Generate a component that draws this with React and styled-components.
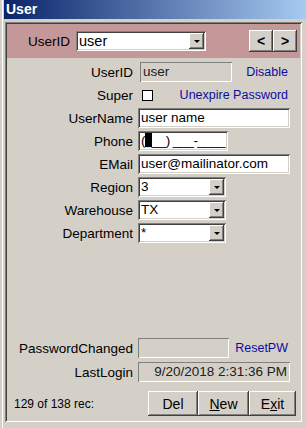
import React from "react";
import styled, { createGlobalStyle } from "styled-components";

const GlobalStyle = createGlobalStyle`
  html, body {
    margin: 0;
    padding: 0;
    background: #d4d0c8;
  }
  body {
    font-family: "Liberation Sans", Arial, sans-serif;
    color: #000;
  }
`;

const raised = `
  box-shadow: inset -1px -1px #404040, inset 1px 1px #fff,
    inset -2px -2px #808080, inset 2px 2px #d4d0c8;
`;
const sunken = `
  box-shadow: inset 1px 1px #808080, inset -1px -1px #fff,
    inset 2px 2px #404040, inset -2px -2px #d4d0c8;
`;

const Page = styled.div`
  width: 306px;
  height: 428px;
  box-sizing: border-box;
  padding-left: 2px;
  background: #d4d0c8;
  overflow: hidden;
`;
const Window = styled.div`
  height: 100%;
  box-sizing: border-box;
  border-left: 1px solid #fff;
  padding-left: 1px;
  display: flex;
  flex-direction: column;
`;
const TitleBar = styled.div`
  flex: 0 0 19px;
  background: linear-gradient(to right, #0a246a, #a6caf0);
  color: #fff;
  font-weight: bold;
  font-size: 14px;
  line-height: 19px;
  padding-left: 2px;
`;
const Frame = styled.div`
  flex: 1;
  margin: 3px 4px 6px 1px;
  padding: 2px;
  display: flex;
  flex-direction: column;
  ${sunken}
`;
const Header = styled.div`
  flex: 0 0 34px;
  background: #c49898;
  display: flex;
  align-items: center;
  padding-right: 3px;
`;
const HeaderLabel = styled.div`
  width: 63px;
  text-align: right;
  font-size: 13.5px;
  margin-right: 6px;
`;
const Combo = styled.div`
  width: ${({ w }) => w}px;
  height: 20px;
  box-sizing: border-box;
  background: #fff;
  display: flex;
  align-items: center;
  justify-content: space-between;
  padding: 2px 2px 2px 3px;
  font-size: ${({ big }) => (big ? 14.5 : 13.5)}px;
  ${sunken}
`;
const ComboText = styled.span`
  line-height: 16px;
`;
const ArrowButton = styled.div`
  width: 15px;
  height: 16px;
  background: #d4d0c8;
  display: flex;
  align-items: center;
  justify-content: center;
  ${raised}
  &:after {
    content: "";
    border-left: 3px solid transparent;
    border-right: 3px solid transparent;
    border-top: 3px solid #000;
    margin-top: 1px;
  }
`;
const NavGroup = styled.div`
  margin-left: auto;
  display: flex;
`;
const NavButton = styled.div`
  width: 24px;
  height: 22px;
  background: #d4d0c8;
  display: flex;
  align-items: center;
  justify-content: center;
  font-size: 14px;
  font-weight: bold;
  ${raised}
`;
const Body = styled.div`
  flex: 1;
  display: flex;
  flex-direction: column;
  padding: 4px 0 4px 0;
`;
const Row = styled.div`
  display: flex;
  align-items: center;
  height: 20px;
  margin-top: ${({ gap }) => gap ?? 3}px;
`;
const Label = styled.div`
  width: 126px;
  margin-right: 5px;
  text-align: right;
  font-size: 13.5px;
  white-space: nowrap;
`;
const TextBox = styled.div`
  width: ${({ w }) => w}px;
  height: 20px;
  box-sizing: border-box;
  background: #fff;
  padding: 0 2px 0 3px;
  font-size: 13.5px;
  line-height: 20px;
  letter-spacing: ${({ tight }) => (tight ? "-0.6px" : "normal")};
  white-space: nowrap;
  overflow: hidden;
  ${sunken}
`;
const ReadBox = styled.div`
  width: ${({ w }) => w}px;
  height: 20px;
  margin-left: ${({ shift }) => shift || 0}px;
  box-sizing: border-box;
  background: #d4d0c8;
  padding: 0 3px;
  font-size: 13.5px;
  line-height: 20px;
  text-align: ${({ right }) => (right ? "right" : "left")};
  color: #202020;
  white-space: nowrap;
  box-shadow: inset 1px 1px #808080, inset -1px -1px #fff;
`;
const Sel = styled.span`
  background: #000;
  color: #fff;
`;
const Check = styled.div`
  width: 11px;
  height: 11px;
  box-sizing: border-box;
  margin-left: 4px;
  border: 1px solid #000;
  background: #fff;
`;
const Link = styled.div`
  margin-left: auto;
  margin-right: 12px;
  font-size: 12.5px;
  color: #0c0ca0;
  white-space: nowrap;
`;
const Spacer = styled.div`
  flex: 1;
`;
const Footer = styled.div`
  display: flex;
  align-items: center;
  margin-top: 9px;
  height: 25px;
`;
const RecCount = styled.div`
  padding-left: 7px;
  font-size: 12px;
`;
const ButtonGroup = styled.div`
  margin-left: auto;
  margin-right: 4px;
  display: flex;
`;
const Button = styled.div`
  width: ${({ w }) => w}px;
  height: 25px;
  box-sizing: border-box;
  background: #d4d0c8;
  display: flex;
  align-items: center;
  justify-content: center;
  font-size: 14px;
  ${raised}
  u {
    text-decoration: underline;
  }
`;

export default function App() {
  return (
    <>
      <GlobalStyle />
      <Page>
        <Window>
          <TitleBar>User</TitleBar>
          <Frame>
            <Header>
              <HeaderLabel>UserID</HeaderLabel>
              <Combo w={130} big>
                <ComboText>user</ComboText>
                <ArrowButton />
              </Combo>
              <NavGroup>
                <NavButton>&lt;</NavButton>
                <NavButton>&gt;</NavButton>
              </NavGroup>
            </Header>
            <Body>
              <Row gap={0}>
                <Label>UserID</Label>
                <ReadBox w={92} shift={2}>user</ReadBox>
                <Link>Disable</Link>
              </Row>
              <Row>
                <Label>Super</Label>
                <Check />
                <Link>Unexpire Password</Link>
              </Row>
              <Row>
                <Label>UserName</Label>
                <TextBox w={152}>user name</TextBox>
              </Row>
              <Row>
                <Label>Phone</Label>
                <TextBox w={90} tight>
                  (<Sel>_</Sel>__) ___-____
                </TextBox>
              </Row>
              <Row>
                <Label>EMail</Label>
                <TextBox w={152}>user@mailinator.com</TextBox>
              </Row>
              <Row>
                <Label>Region</Label>
                <Combo w={88}>
                  <ComboText>3</ComboText>
                  <ArrowButton />
                </Combo>
              </Row>
              <Row>
                <Label>Warehouse</Label>
                <Combo w={88}>
                  <ComboText>TX</ComboText>
                  <ArrowButton />
                </Combo>
              </Row>
              <Row>
                <Label>Department</Label>
                <Combo w={88}>
                  <ComboText>*</ComboText>
                  <ArrowButton />
                </Combo>
              </Row>
              <Spacer />
              <Row gap={0}>
                <Label>PasswordChanged</Label>
                <ReadBox w={91} />
                <Link>ResetPW</Link>
              </Row>
              <Row gap={4}>
                <Label>LastLogin</Label>
                <ReadBox w={152} right>
                  9/20/2018 2:31:36 PM
                </ReadBox>
              </Row>
              <Footer>
                <RecCount>129 of 138 rec:</RecCount>
                <ButtonGroup>
                  <Button w={50}>Del</Button>
                  <Button w={51}>
                    <u>N</u>ew
                  </Button>
                  <Button w={47}>
                    E<u>x</u>it
                  </Button>
                </ButtonGroup>
              </Footer>
            </Body>
          </Frame>
        </Window>
      </Page>
    </>
  );
}
